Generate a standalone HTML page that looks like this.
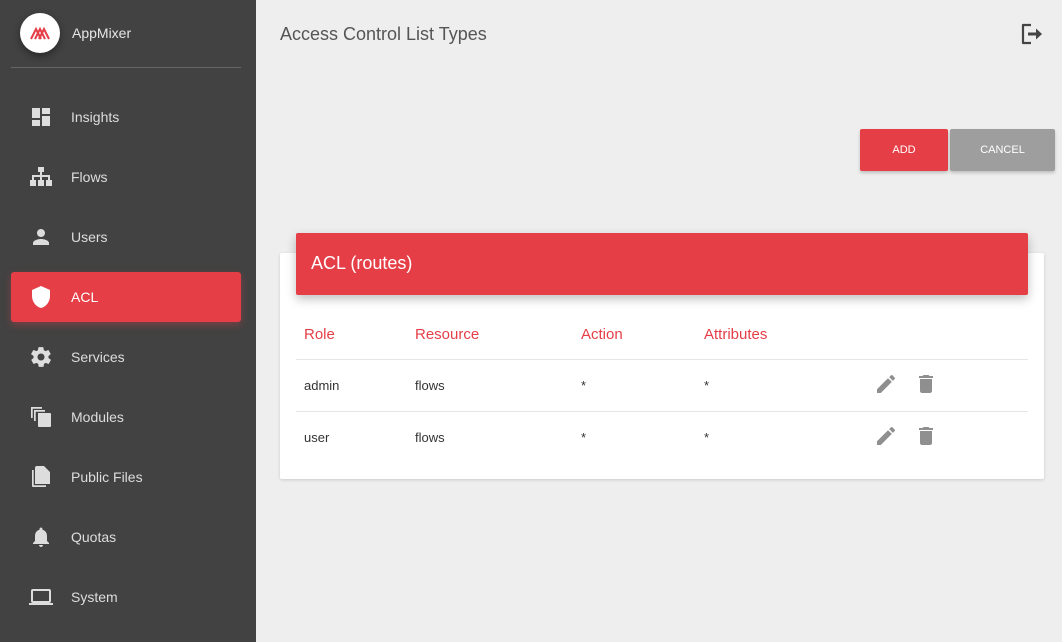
<!DOCTYPE html>
<html><head><style>
*{margin:0;padding:0;box-sizing:border-box}
body{width:1062px;height:642px;overflow:hidden;background:#eeeeee;font-family:"Liberation Sans",sans-serif;position:relative}
.sb{position:absolute;left:0;top:0;width:256px;height:642px;background:#424242}
.logo{position:absolute;left:20px;top:13px;width:40px;height:40px;border-radius:50%;background:#fff;box-shadow:0 3px 8px rgba(0,0,0,.4)}
.brand{position:absolute;left:72px;top:25px;color:#e6e6e6;font-size:14px}
.div{position:absolute;left:11px;top:67px;width:230px;height:1px;background:#666}
.item{position:absolute;left:11px;width:230px;height:50px;color:#ddd;font-size:14px}
.item span{position:absolute;left:60px;top:17px}
.item svg{position:absolute;left:18px;top:13px;width:24px;height:24px;fill:#ddd}
.act{background:#e53e47;border-radius:3px;box-shadow:0 3px 8px rgba(229,62,71,.35);color:#fff}
.act svg{fill:#fff}
.title{position:absolute;left:280px;top:24px;font-size:18px;color:#555}
.btn{position:absolute;top:129px;height:42px;color:#fff;font-size:11px;text-align:center;line-height:42px;border-radius:2px;box-shadow:0 2px 3px rgba(0,0,0,.2)}
.card{position:absolute;left:280px;top:253px;width:764px;height:226px;background:#fff;border-radius:2px;box-shadow:0 1px 3px rgba(0,0,0,.15)}
.hdr{position:absolute;left:296px;top:233px;width:732px;height:62px;background:#e53e47;border-radius:2px;box-shadow:0 4px 10px rgba(0,0,0,.25);color:#fff;font-size:18px;padding:20px 15px}
.t{position:absolute;font-size:13px;color:#333}
.th{position:absolute;font-size:15px;color:#e53e47;top:326px}
.line{position:absolute;left:296px;width:732px;height:1px;background:#e6e6e6}
.ic{position:absolute;fill:#8f8f8f}
</style></head><body>
<div class="sb">
<div class="logo"><svg width="40" height="40" viewBox="0 0 40 40"><g stroke="#e53e47" stroke-width="2" fill="none"><path d="M11 26l5-10 5 10M15 26l5-10 5 10M19 26l5-10 5 10"/></g></svg></div>
<div class="brand">AppMixer</div>
<div class="div"></div>
<div class="item" style="top:92px"><svg viewBox="0 0 24 24"><path d="M3 13h8V3H3v10zm0 8h8v-6H3v6zm10 0h8V11h-8v10zm0-18v6h8V3h-8z"/></svg><span>Insights</span></div>
<div class="item" style="top:152px"><svg viewBox="0 0 24 24"><path d="M9 2h6v5h-2v3h8v5h2v6h-6v-6h2v-3h-6v3h2v6H9v-6h2v-3H5v3h2v6H1v-6h2v-5h8V7H9z"/></svg><span>Flows</span></div>
<div class="item" style="top:212px"><svg viewBox="0 0 24 24"><path d="M12 12c2.2 0 4-1.8 4-4s-1.8-4-4-4-4 1.8-4 4 1.8 4 4 4zm0 2c-2.7 0-8 1.3-8 4v2h16v-2c0-2.7-5.3-4-8-4z"/></svg><span>Users</span></div>
<div class="item act" style="top:272px"><svg viewBox="0 0 24 24"><path d="M12 1L3 5v6c0 5.6 3.8 10.7 9 12 5.2-1.3 9-6.4 9-12V5l-9-4z"/></svg><span>ACL</span></div>
<div class="item" style="top:332px"><svg viewBox="0 0 24 24"><path d="M19.4 13c0-.3.1-.6.1-1s0-.7-.1-1l2.1-1.6c.2-.2.2-.4.1-.6l-2-3.5c-.1-.2-.4-.3-.6-.2l-2.5 1c-.5-.4-1.1-.7-1.700-1l-.4-2.6c0-.2-.2-.4-.5-.4h-4c-.2 0-.4.2-.5.4l-.4 2.6c-.6.3-1.2.6-1.7 1l-2.5-1c-.2-.1-.5 0-.6.2l-2 3.5c-.1.2 0 .5.1.6L4.6 11c0 .3-.1.7-.1 1s0 .7.1 1l-2.1 1.6c-.2.2-.2.4-.1.6l2 3.5c.1.2.4.3.6.2l2.5-1c.5.4 1.1.7 1.7 1l.4 2.6c0 .2.2.4.5.4h4c.2 0 .4-.2.5-.4l.4-2.6c.6-.3 1.2-.6 1.7-1l2.5 1c.2.1.5 0 .6-.2l2-3.5c.1-.2 0-.5-.1-.6L19.4 13zM12 15.5c-1.9 0-3.5-1.6-3.5-3.5s1.6-3.5 3.5-3.5 3.5 1.6 3.5 3.5-1.6 3.5-3.5 3.5z"/></svg><span>Services</span></div>
<div class="item" style="top:392px"><svg viewBox="0 0 24 24"><path d="M2 2h11v1.7H3.7V13H2zM5 5h11v1.7H6.7V16H5zM9 8h12a1 1 0 011 1v12a1 1 0 01-1 1H10a1 1 0 01-1-1z"/></svg><span>Modules</span></div>
<div class="item" style="top:452px"><svg viewBox="0 0 24 24"><path d="M15 1H8a2 2 0 00-2 2v16h15V7zM3 5h1.7v15.3H17V22H4a1 1 0 01-1-1z"/></svg><span>Public Files</span></div>
<div class="item" style="top:512px"><svg viewBox="0 0 24 24"><path d="M12 22c1.1 0 2-.9 2-2h-4c0 1.1.9 2 2 2zm6-6v-5c0-3.1-1.6-5.6-4.5-6.3V4c0-.8-.7-1.5-1.5-1.5s-1.5.7-1.5 1.5v.7C7.6 5.4 6 7.9 6 11v5l-2 2v1h16v-1l-2-2z"/></svg><span>Quotas</span></div>
<div class="item" style="top:572px"><svg viewBox="0 0 24 24"><path d="M20 18a2 2 0 002-2V6a2 2 0 00-2-2H4a2 2 0 00-2 2v10a2 2 0 002 2H0v2h24v-2h-4zM4 6h16v10H4z"/></svg><span>System</span></div>
</div>
<div class="title">Access Control List Types</div>
<svg style="position:absolute;left:1020px;top:22px" width="24" height="24" viewBox="0 0 24 24"><path fill="none" stroke="#444" stroke-width="2.2" stroke-linejoin="round" d="M11 3H3v18h8"/><path fill="#444" d="M8 10.5h8V6.5l6 5.5-6 5.5v-4H8z"/></svg>
<div class="btn" style="left:860px;width:88px;background:#e53e47">ADD</div>
<div class="btn" style="left:950px;width:105px;background:#9e9e9e">CANCEL</div>
<div class="card"></div>
<div class="hdr">ACL (routes)</div>
<div class="th" style="left:304px">Role</div>
<div class="th" style="left:415px">Resource</div>
<div class="th" style="left:581px">Action</div>
<div class="th" style="left:704px">Attributes</div>
<div class="line" style="top:359px"></div>
<div class="line" style="top:411px"></div>
<div class="t" style="left:304px;top:378px">admin</div><div class="t" style="left:415px;top:378px">flows</div><div class="t" style="left:581px;top:378px">*</div><div class="t" style="left:704px;top:378px">*</div>
<div class="t" style="left:304px;top:430px">user</div><div class="t" style="left:415px;top:430px">flows</div><div class="t" style="left:581px;top:430px">*</div><div class="t" style="left:704px;top:430px">*</div>
<svg class="ic" style="left:874px;top:372px" width="24" height="24" viewBox="0 0 24 24"><path d="M3 17.2V21h3.8L17.8 9.9 14 6.2zM20.7 7c.4-.4.4-1 0-1.4l-2.3-2.3c-.4-.4-1-.4-1.4 0l-1.8 1.8 3.7 3.8z"/></svg>
<svg class="ic" style="left:914px;top:372px" width="24" height="24" viewBox="0 0 24 24"><path d="M6 19c0 1.1.9 2 2 2h8c1.1 0 2-.9 2-2V7H6zM19 4h-3.5l-1-1h-5l-1 1H5v2h14z"/></svg>
<svg class="ic" style="left:874px;top:424px" width="24" height="24" viewBox="0 0 24 24"><path d="M3 17.2V21h3.8L17.8 9.9 14 6.2zM20.7 7c.4-.4.4-1 0-1.4l-2.3-2.3c-.4-.4-1-.4-1.4 0l-1.8 1.8 3.7 3.8z"/></svg>
<svg class="ic" style="left:914px;top:424px" width="24" height="24" viewBox="0 0 24 24"><path d="M6 19c0 1.1.9 2 2 2h8c1.1 0 2-.9 2-2V7H6zM19 4h-3.5l-1-1h-5l-1 1H5v2h14z"/></svg>
</body></html>
